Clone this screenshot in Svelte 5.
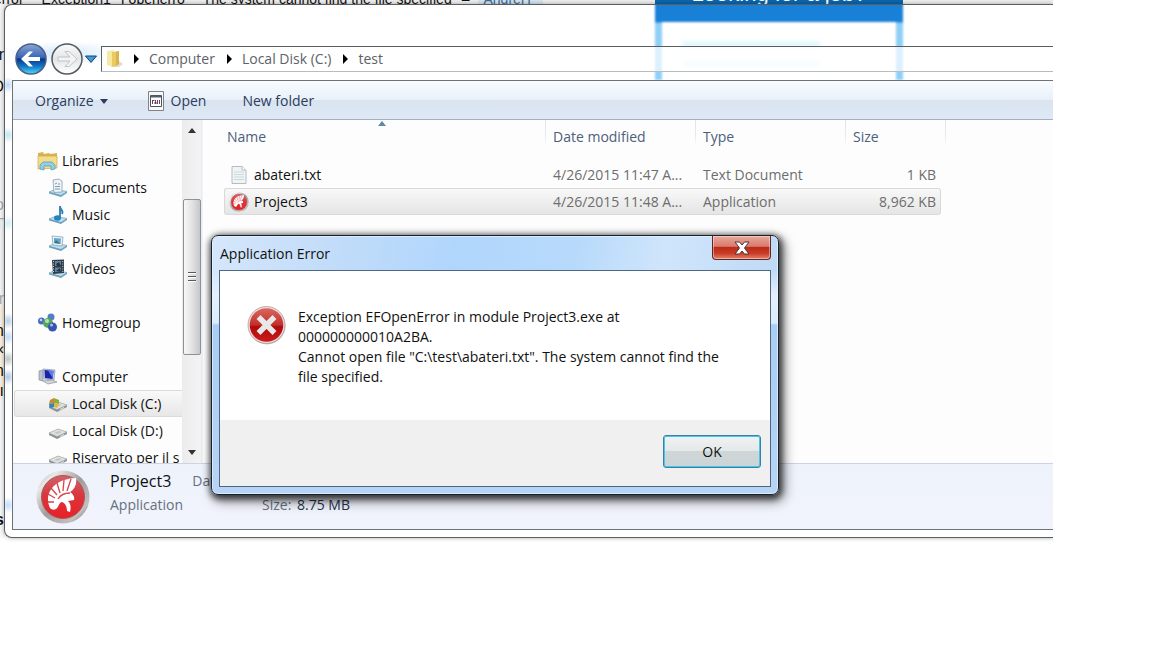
<script>
  const libraries = ['Documents', 'Music', 'Pictures', 'Videos'];
  const drives = ['Local Disk (C:)', 'Local Disk (D:)', 'Riservato per il s'];
  const crumbs = ['Computer', 'Local Disk (C:)', 'test'];
  const files = [
    { name: 'abateri.txt', icon: 'text', date: '4/26/2015 11:47 A...', type: 'Text Document', size: '1 KB' },
    { name: 'Project3', icon: 'app', date: '4/26/2015 11:48 A...', type: 'Application', size: '8,962 KB', selected: true }
  ];
  const margin = [
    { t: 'r', y: 46 }, { t: 'O', y: 78 }, { t: 'o', y: 196, faint: true }, { t: 'T', y: 216, faint: true },
    { t: 'r', y: 290, faint: true }, { t: 'n', y: 322 }, { t: '‹', y: 340 }, { t: 'n', y: 362 }, { t: 'ı', y: 382 }
  ];
</script>

{#snippet helmet(size)}
  <svg width={size} height={size} viewBox="0 0 54 54" aria-hidden="true">
    <defs>
      <linearGradient id="rim{size}" x1="0" y1="0" x2="1" y2="1">
        <stop offset="0" stop-color="#a9a4a4" /><stop offset=".2" stop-color="#e9e7e7" /><stop offset=".5" stop-color="#a49c9c" />
        <stop offset=".8" stop-color="#c4c0c0" /><stop offset="1" stop-color="#5d5555" />
      </linearGradient>
      <linearGradient id="red{size}" x1="0" y1="0" x2="0" y2="1">
        <stop offset="0" stop-color="#cf6368" /><stop offset=".45" stop-color="#d8383e" /><stop offset="1" stop-color="#e81f25" />
      </linearGradient>
    </defs>
    <circle cx="27" cy="27" r="26.500" fill="url(#rim{size})" />
    <circle cx="27" cy="27" r="21.500" fill="url(#red{size})" stroke="#a8585c" />
    <path d="M14 38 C8 26 15 9 40 8 C41 14 39 19 34 22 C37 24 39 27 38 30 L32 31 C35 34 35 38 34 42 L31 41 C31 36 29 33 26 32 C23 32 23 37 20 39 C18 40 16 40 14 38 Z" fill="#fff" />
    <path d="M31 21 L35 9 M27 21 L28 10 M24 23 L21 13 M21 25 L15 18 M19 28 L12 24 M18 32 L12 32 M22 29 C25 24 29 23 34 23" fill="none" stroke="#d9434a" stroke-width="1.300" />
  </svg>
{/snippet}

{#snippet tray()}
  <path d="M1 14 L7 11.500 L19 13.500 L13 18 Z" fill="#b9dff0" stroke="#78aac4" stroke-width=".8" />
  <path d="M1 14 L13 17 L19 13.500 L19 15 L13 19 L1 15.500 Z" fill="#6fa3bd" />
{/snippet}

{#snippet libIcon(kind)}
  <svg width="20" height="20" viewBox="0 0 20 20" aria-hidden="true">
    {@render tray()}
    {#if kind === 'Documents'}
      <path d="M5 2 L11 1 L14 3 L14 14 L6 14.500 Z" fill="#edf3f8" stroke="#8c9fb0" stroke-width=".8" />
      <path d="M7 6 L9 5 M10 6 H12 M7 8.500 H12 M7 11 H12" stroke="#7e9bb5" stroke-width="1" />
    {:else if kind === 'Music'}
      <path d="M12 12 V1 C12 5 16 5 14 9" fill="none" stroke="#2e7db5" stroke-width="1.800" />
      <ellipse cx="9.500" cy="13" rx="3.500" ry="2.800" fill="#2383c0" />
    {:else if kind === 'Pictures'}
      <path d="M4 4 L15 5 L14 14 L5 13 Z" fill="#edf4f7" stroke="#8ba3b2" stroke-width=".8" />
      <path d="M6 6 L13 6.500 L12.500 12 L6 11 Z" fill="#62a7d0" /><path d="M6 11 L8 8 L12.500 12 Z" fill="#3c7781" />
    {:else}
      <path d="M4 1 L16 0.500 L16 14 L5 15 Z" fill="#333b44" />
      <path d="M7 2 H13 V7 H7 Z M7 8.500 H13 V13 H7 Z" fill="#5988ad" />
      <path d="M5.500 2 V14 M14.800 2 V14" stroke="#c9d2d8" stroke-width="1" stroke-dasharray="1 1.500" />
      <path d="M8 5 L11 3 L13 7 H9 Z M8 12 L12 9 L13 13 Z" fill="#26323c" />
    {/if}
  </svg>
{/snippet}

{#snippet driveIcon(system)}
  <svg width="20" height="20" viewBox="0 0 20 20" aria-hidden="true">
    <path d="M1 12 L10 8 L19 11 L19 13 L9 18 L1 14 Z" fill="#8e9290" />
    <path d="M1 12 L10 8 L19 11 L9 15.500 Z" fill="#e0e2e0" stroke="#a4a8a5" stroke-width=".6" />
    <path d="M6 12 L11 10 L14 11 L9 13 Z" fill="#c3c7c4" /><path d="M12 15.500 L16 13.500" stroke="#e9ecea" />
    {#if system}
      <path d="M2 6 L6 4 L6 9 L1 10 Z" fill="#c68a32" /><path d="M6 4 L11 6 L11 10 L6 9 Z" fill="#8cae3a" />
      <path d="M1 10 L6 9 L6 13 L2 14 Z" fill="#3484b8" /><path d="M6 9 L11 10 L9 14 L6 13 Z" fill="#dfb93d" />
    {/if}
  </svg>
{/snippet}

<div class="desktop">
  <div class="backdrop" aria-hidden="true">
    <p class="headline"><span>error</span><span>Exception1</span><span class="near">I openerro</span><span>The system cannot find the file specified</span><span class="near">–</span><span class="tag">AndreH</span></p>
    <div class="advert">Looking for a job?</div>
    {#each margin as m}<span class="edge" class:faint={m.faint} style="top:{m.y}px">{m.t}</span>{/each}
    <b class="edge last">s</b>
  </div>

  <main class="window">
    <div class="glass" aria-hidden="true">
      <div class="frosted"><i></i><i></i></div>
    </div>
    <header class="nav">
      <div class="travel">
        <button class="round" aria-label="Back">
          <svg width="32" height="32" viewBox="0 0 32 32">
            <defs>
              <linearGradient id="bk" x1="0" y1="0" x2="0" y2="1"><stop offset="0" stop-color="#8ba5d5" /><stop offset=".45" stop-color="#3766b5" /><stop offset=".5" stop-color="#07358c" /><stop offset=".75" stop-color="#1379c9" /><stop offset="1" stop-color="#54dcf8" /></linearGradient>
            </defs>
            <circle cx="16" cy="16" r="15" fill="url(#bk)" stroke="#4a5f85" stroke-width="1.500" />
            <path d="M6 16 L14 8.500 H18 L13 14 H25 V18 H13 L18 23.500 H14 Z" fill="#fff" />
          </svg>
        </button>
        <button class="round" aria-label="Forward">
          <svg width="32" height="32" viewBox="0 0 32 32">
            <defs><linearGradient id="fw" x1="0" y1="0" x2="0" y2="1"><stop offset="0" stop-color="#fafafa" /><stop offset=".5" stop-color="#e2e6e8" /><stop offset="1" stop-color="#fff" /></linearGradient></defs>
            <circle cx="16" cy="16" r="15" fill="url(#fw)" stroke="#55595e" stroke-width="1.500" />
            <path d="M26 16 L18 8.500 H14 L19 14 H7 V18 H19 L14 23.500 H18 Z" fill="#f3f4f4" stroke="#bfc4c7" />
          </svg>
        </button>
        <button class="recent" aria-label="Recent pages"><svg width="12" height="8" viewBox="0 0 12 8"><path d="M.5 1 H11.500 L6 7.500 Z" fill="#3f9bd5" stroke="#173f73" /></svg></button>
      </div>
      <nav class="address" aria-label="Address">
        <svg width="18" height="20" viewBox="0 0 18 20" aria-hidden="true">
          <path d="M8 8 L17 15 L13 18 H5 Z" fill="#e0ddce" /><path d="M1 2 L8 1 V18 L1 16 Z" fill="#f8e9a2" /><path d="M6 3 L13 2 V15 L8 18 L6 17 Z" fill="#eacb62" /><path d="M10 3 L13 2 V15 L10 17 Z" fill="#d9b44d" />
        </svg>
        {#each crumbs as c}
          <span class="arrow"></span><a href="#top">{c}</a>
        {/each}
      </nav>
    </header>

    <div class="client">
      <div class="toolbar">
        <button class="organize">Organize <span class="caret"></span></button>
        <button>
          <svg width="16" height="20" viewBox="0 0 16 20" aria-hidden="true"><path d="M.5 .5 H15.500 V19.500 H.5 Z" fill="#f7f7f5" stroke="#808389" /><path d="M2.500 4.500 H13.500 V15.500 H2.500 Z" fill="#fff" stroke="#4d525b" /><path d="M3 5.500 H13" stroke="#555d69" stroke-width="2" /><path d="M4.500 9 V13 M4 9.500 H6.500 M7.500 9 V13 M9.500 9 V13 M11.500 9 V13 M6 12 H9" stroke="#6c3f67" /></svg>
          Open
        </button>
        <button>New folder</button>
      </div>

      <div class="body">
        <aside class="side">
          <div class="node top">
            <svg width="22" height="20" viewBox="0 0 22 20" aria-hidden="true"><path d="M1 2 L6 1 L7 3 L12 2 L13 3 L20 2 V17 H1 Z" fill="#d8b34e" /><path d="M1 5 H20 V17 L1 18 Z" fill="#f3dc8b" stroke="#cfa84a" stroke-width=".7" /><path d="M3 18 V14 L6 11 H15 L18 14 V18 L14 19 V15 H7 V19 Z" fill="#8fd0e6" stroke="#5195b8" stroke-width=".7" /></svg>
            Libraries
          </div>
          {#each libraries as l}<div class="node">{@render libIcon(l)}{l}</div>{/each}
          <div class="node top gap">
            <svg width="22" height="20" viewBox="0 0 22 20" aria-hidden="true"><circle cx="14" cy="4" r="3.500" fill="#557dc7" /><circle cx="4.500" cy="8" r="3.500" fill="#4a6cc0" /><circle cx="11" cy="10" r="5" fill="#54a95c" /><circle cx="10" cy="8" r="2" fill="#b8dfb2" /><circle cx="15.500" cy="14" r="4.500" fill="#3557ae" /><circle cx="14.500" cy="12" r="1.500" fill="#aebfe9" /><circle cx="4" cy="7" r="1.300" fill="#c3d0f0" /></svg>
            Homegroup
          </div>
          <div class="node top gap">
            <svg width="22" height="20" viewBox="0 0 22 20" aria-hidden="true"><path d="M2 4 L6 3 V14 L2 13 Z" fill="#bac1cd" stroke="#868f9e" stroke-width=".7" /><path d="M6 2 L18 3 L17 13 L7 12 Z" fill="#c5cde0" stroke="#8d96ac" stroke-width=".7" /><path d="M7.500 3 L16.500 4 L15.500 12 L8 11 Z" fill="#1725a8" /><path d="M11 3.500 L16.500 4 L15.500 11 Z" fill="#5d7df0" /><path d="M6 14 L15 13 L20 15 L11 17 Z" fill="#d2d5da" stroke="#90959f" stroke-width=".7" /></svg>
            Computer
          </div>
          {#each drives as d, i}<div class="node" class:current={i === 0}>{@render driveIcon(i === 0)}{d}</div>{/each}
        </aside>

        <div class="scroll" aria-hidden="true">
          <span class="up"></span>
          <div class="thumb"><i></i><i></i><i></i></div>
          <span class="down"></span>
        </div>

        <section class="files">
          <table>
            <colgroup><col class="c-name" /><col class="c-mid" /><col class="c-mid" /><col class="c-size" /><col class="c-end" /></colgroup>
            <thead>
              <tr><th>Name<span class="sort"></span></th><th>Date modified</th><th>Type</th><th colspan="2">Size</th></tr>
            </thead>
            <tbody>
              {#each files as f}
                <tr class:selected={f.selected}>
                  <td>
                    <div class="file">
                      {#if f.icon === 'app'}
                        {@render helmet(20)}
                      {:else}
                        <svg width="20" height="20" viewBox="0 0 20 20" aria-hidden="true"><path d="M3 1.500 H13 L17 5 V18.500 H3 Z" fill="#f0f4f4" stroke="#b5bdc0" /><path d="M13 1.500 V5 H17" fill="#fff" stroke="#b5bdc0" /><path d="M5 7 H15 M5 9.500 H15 M5 12 H15 M5 14.500 H15" stroke="#ccd8dc" /></svg>
                      {/if}
                      {f.name}
                    </div>
                  </td>
                  <td>{f.date}</td><td>{f.type}</td><td class="num">{f.size}</td>
                </tr>
              {/each}
            </tbody>
          </table>
        </section>
      </div>

      <footer class="details">
        {@render helmet(54)}
        <div class="facts">
          <div class="title"><strong>Project3</strong><span>Date modified:</span></div>
          <div class="sub"><span>Application</span><span>Size: <em>8.75 MB</em></span></div>
        </div>
      </footer>
    </div>
  </main>

  <div class="dialog" role="alertdialog" aria-labelledby="dlg-title" aria-describedby="dlg-text">
    <div class="caption">
      <h1 id="dlg-title">Application Error</h1>
      <button class="close" aria-label="Close"><svg width="18" height="14" viewBox="0 0 18 14"><path d="M2 1 H6.500 L9 4 L11.500 1 H16 L11.500 7 L16 13 H11.500 L9 10 L6.500 13 H2 L6.500 7 Z" fill="#fff" stroke="#4a3540" /></svg></button>
    </div>
    <div class="panel">
      <div class="message">
        <svg width="40" height="40" viewBox="0 0 40 40" aria-hidden="true">
          <defs><linearGradient id="er" x1="0" y1="0" x2="0" y2="1"><stop offset="0" stop-color="#d9675f" /><stop offset=".5" stop-color="#c22f2b" /><stop offset=".55" stop-color="#b00a0c" /><stop offset="1" stop-color="#c91f1c" /></linearGradient></defs>
          <circle cx="20" cy="20" r="18.500" fill="#c9c9c9" /><circle cx="19.500" cy="19" r="18.500" fill="#f0dcdc" stroke="#b28a8a" stroke-width=".7" /><circle cx="19.500" cy="19" r="16.800" fill="url(#er)" />
          <path d="M11.500 11 L27.500 27 M27.500 11 L11.500 27" stroke="#e9e8e8" stroke-width="5.500" />
        </svg>
        <p id="dlg-text">Exception EFOpenError in module Project3.exe at<br />000000000010A2BA.<br />Cannot open file "C:\test\abateri.txt". The system cannot find the<br />file specified.</p>
      </div>
      <div class="actions"><button class="ok">OK</button></div>
    </div>
  </div>
</div>

<style>
  :global(body) { background: #fff; }
  * { box-sizing: border-box; }
  button { font: inherit; color: inherit; background: none; border: 0; padding: 0; }
  svg { display: block; flex: none; }
  .desktop {
    position: relative; overflow: hidden; margin-right: 99px; padding: 4px 0 12px 4px;
    font: 14px/20px "Open Sans", "Noto Sans", sans-serif; color: #111;
  }

  .backdrop {
    position: absolute; inset: 0 0 12px; overflow: hidden; font: 16px/18px "Liberation Sans", sans-serif;
    background: linear-gradient(#f4f4f4 300px, #f8eedd 310px 390px, #f7f7f7 400px) 0 0 / 5px 100% no-repeat;
  }
  .headline { position: absolute; top: -10px; left: -6px; right: 0; margin: 0; height: 15px; display: flex; gap: 18px; white-space: nowrap; background: #eee; font-size: 14px; }
  .near { margin-left: -8px; }
  .tag { background: #d5e3ee; color: #3e6d97; padding: 0 12px 0 6px; margin-left: -10px; }
  .advert { position: absolute; top: 0; left: 655px; width: 248px; height: 5px; line-height: 22px; background: #0c65ad; color: #fff; font-size: 22px; display: flex; align-items: flex-end; justify-content: center; overflow: hidden; }
  .edge { position: absolute; left: 0; width: 4px; display: flex; justify-content: flex-end; }
  .edge.faint { color: #aaa; }
  .edge.last { top: 511px; }

  .window {
    position: relative; border: 1px solid #5b5e60; border-right: 0; border-radius: 8px 0 0 8px;
    background: #fff; padding: 0 0 7px 7px; box-shadow: 0 0 4px #0005;
  }
  .glass {
    position: absolute; inset: 0; overflow: hidden; border-radius: 7px 0 0 7px;
    background:
      radial-gradient(closest-side, #a9d4f680, transparent) 0 36px / 120px 24px no-repeat,
      radial-gradient(closest-side, #9cc4f0a0, transparent) -4px 72px / 14px 16px no-repeat,
      radial-gradient(closest-side, #9cd4e8a0, transparent) -4px 122px / 14px 16px no-repeat,
      radial-gradient(closest-side, #b4e8f0a0, transparent) -4px 210px / 14px 16px no-repeat,
      radial-gradient(closest-side, #8fb0d0a0, transparent) -4px 308px / 14px 16px no-repeat,
      radial-gradient(closest-side, #9cc4f0a0, transparent) -4px 324px / 14px 16px no-repeat,
      radial-gradient(closest-side, #8f9f9fa0, transparent) -4px 346px / 14px 16px no-repeat,
      radial-gradient(closest-side, #7fa4d0a0, transparent) -4px 364px / 14px 16px no-repeat,
      radial-gradient(closest-side, #9cc4f8a0, transparent) -4px 492px / 14px 16px no-repeat;
  }
  .frosted {
    position: absolute; left: 650px; top: -8px; width: 248px; height: 90px; padding: 44px 76px 0 20px;
    border: 7px solid #8fcff8; border-top: 25px solid #1880d6; filter: blur(1px);
    border-image: linear-gradient(#1880d6 25px, #8fcff8 26px) 25 7 0 7; display: flex; flex-direction: column; gap: 14px;
    padding-top: 20px;
  }
  .frosted i { height: 5px; background: #d6f4f8; filter: blur(2px); }
  .nav { position: relative; display: flex; align-items: center; padding: 41px 0 8px; height: 75px; }
  .travel { display: flex; align-items: center; gap: 4px; padding-left: 3px; width: 89px; }
  .recent { width: 12px; margin-left: -2px; }
  .address {
    flex: 1; height: 26px; display: flex; align-items: center; gap: 10px; padding-left: 4px;
    border: 1px solid #5b5e60; border-bottom-color: #b7bec0; border-right: 0; background: #ffffffb0;
  }
  .address a { color: #5d6268; text-decoration: none; }
  .arrow { border: 5px solid transparent; border-left-color: #000; border-right: 0; }
  .address a + .arrow { margin-left: 2px; }

  .client { position: relative; border: 1px solid #6b7278; border-right: 0; background: #fdfdfd; }
  .toolbar {
    display: flex; align-items: center; gap: 36px; height: 39px; padding: 2px 0 0 22px; color: #2b3c5c;
    border-bottom: 1px solid #a0afc3; background: linear-gradient(#f9fcff, #e8f0fa 50%, #dae4f1 51%, #dfe9f5);
  }
  .toolbar button { display: flex; align-items: center; gap: 7px; }
  .toolbar .organize { gap: 6px; margin-right: 4px; }
  .caret { border: 4px solid transparent; border-top: 5px solid #2b3c5c; border-bottom: 0; }

  .body { display: flex; height: 343px; overflow: hidden; }
  .side { flex: none; width: 169px; padding: 27px 0 0 1px; overflow: hidden; }
  .node { display: flex; align-items: center; gap: 4px; height: 27px; padding-left: 33px; white-space: nowrap; border: 1px solid transparent; border-right: 0; border-radius: 3px 0 0 3px; }
  .top { padding-left: 22px; gap: 3px; }
  .gap { margin-top: 27px; }
  .current { background: linear-gradient(#f9f9f9, #e7e7e7); border-color: #dcdcdc; }
  .scroll { flex: none; width: 22px; display: flex; flex-direction: column; align-items: center; padding: 8px 3px 8px 0; background: linear-gradient(90deg, #ececec, #f3f3f3 19px, #dfe6f0 20px, #fff 21px); }
  .up { border: 4px solid transparent; border-bottom: 5px solid #333; border-top: 0; }
  .down { border: 4px solid transparent; border-top: 5px solid #333; border-bottom: 0; margin-top: auto; }
  .thumb { width: 18px; height: 156px; margin-top: 66px; border: 1px solid #8f9195; border-radius: 2px; background: linear-gradient(90deg, #f8f8f8, #e3e3e5 50%, #c6c7ca); display: flex; flex-direction: column; gap: 2px; justify-content: center; align-items: center; }
  .thumb i { width: 8px; height: 2px; background: #55585c; border-bottom: 1px solid #fff; }

  .files { flex: 1; min-width: 0; padding-left: 20px; }
  table { table-layout: fixed; width: 722px; border-collapse: separate; border-spacing: 0; }
  .c-name { width: 322px; }
  .c-mid { width: 150px; }
  .c-size { width: 95px; }
  .c-end { width: 5px; }
  th { height: 41px; padding: 7px 0 14px 7px; text-align: left; font-weight: 400; color: #4c607a; background: linear-gradient(#dbe4ee, #e6ecf2 60%, #fff) right top / 1px 28px no-repeat; }
  th:first-child { padding-left: 3px; position: relative; }
  .sort { position: absolute; left: 154px; top: 1px; border: 4px solid transparent; border-bottom: 5px solid #5b88ab; border-top: 0; }
  td { height: 27px; padding: 0 0 0 7px; color: #6d6d6d; white-space: nowrap; border: 1px solid transparent; border-width: 1px 0; }
  td:first-child { padding-left: 5px; color: #111; }
  td.num { text-align: right; padding: 0 5px 0 0; }
  .file { display: flex; align-items: center; gap: 5px; }
  .selected td { background: linear-gradient(#f8f8f8, #e5e5e5); border-color: #d9d9d9; }
  .selected td:first-child { border-left-width: 1px; border-radius: 3px 0 0 3px; padding-left: 4px; }
  .selected td:last-child { border-right-width: 1px; border-radius: 0 3px 3px 0; padding-right: 4px; }

  .details { display: flex; align-items: center; gap: 20px; height: 66px; padding-left: 23px; border-top: 1px solid #ccd3e2; background: linear-gradient(#eef2fb, #f1f4fc); overflow: hidden; }
  .facts { display: flex; flex-direction: column; gap: 4px; margin-top: -7px; color: #67707d; }
  .title { display: flex; gap: 21px; }
  .title strong { font-weight: 400; font-size: 16px; color: #111; }
  .sub { display: flex; gap: 79px; }
  em { font-style: normal; color: #26344f; margin-left: 2px; }

  .dialog {
    position: absolute; left: 211px; top: 235px; width: 568px; border: 1px solid #152230; border-radius: 7px;
    padding: 0 7px 7px;
    background:
      linear-gradient(transparent 34px, #e4f0fc 60px, #dcebfb 87px, #a9cdf5 89px, #b7d4f4) 0 0 / 100% 100%,
      linear-gradient(100deg, #d5e7fb, #c2dcf9 20%, #b1d6fc 40%, #b7dafb 60%, #d0e5fb 75%, #b9d6f4);
    box-shadow: inset 0 0 0 1px #e8f4ffb0, 1px 2px 6px 2px #000a, 4px 5px 12px 2px #0006;
  }
  .caption { display: flex; justify-content: space-between; align-items: flex-start; height: 34px; }
  h1 { margin: 8px 0 0 1px; font-size: 14px; line-height: 20px; font-weight: 400; }
  .close { width: 59px; height: 24px; display: grid; place-items: center; border: 1px solid #61262a; border-top: 0; border-radius: 0 0 4px 4px; background: linear-gradient(#eaa99d, #d9796b 45%, #bb2b16 50%, #c93b26 75%, #e28468); box-shadow: inset 0 0 0 1px #fff6; }
  .panel { border: 1px solid #4c6785; background: #fff; }
  .message { display: flex; gap: 11px; align-items: flex-start; height: 149px; padding: 35px 0 0 27px; }
  .message p { margin: 1px 0 0; white-space: nowrap; }
  .actions { display: flex; justify-content: flex-end; padding: 15px 9px 18px; background: #f0f0f0; }
  .ok { width: 98px; height: 33px; border: 1px solid #3c7fa1; border-radius: 3px; background: linear-gradient(#f1f3f3, #e4e8e9 48%, #cfd6d8 50%, #cbd4d7); box-shadow: inset 0 0 0 1px #48c6ee; }
</style>
